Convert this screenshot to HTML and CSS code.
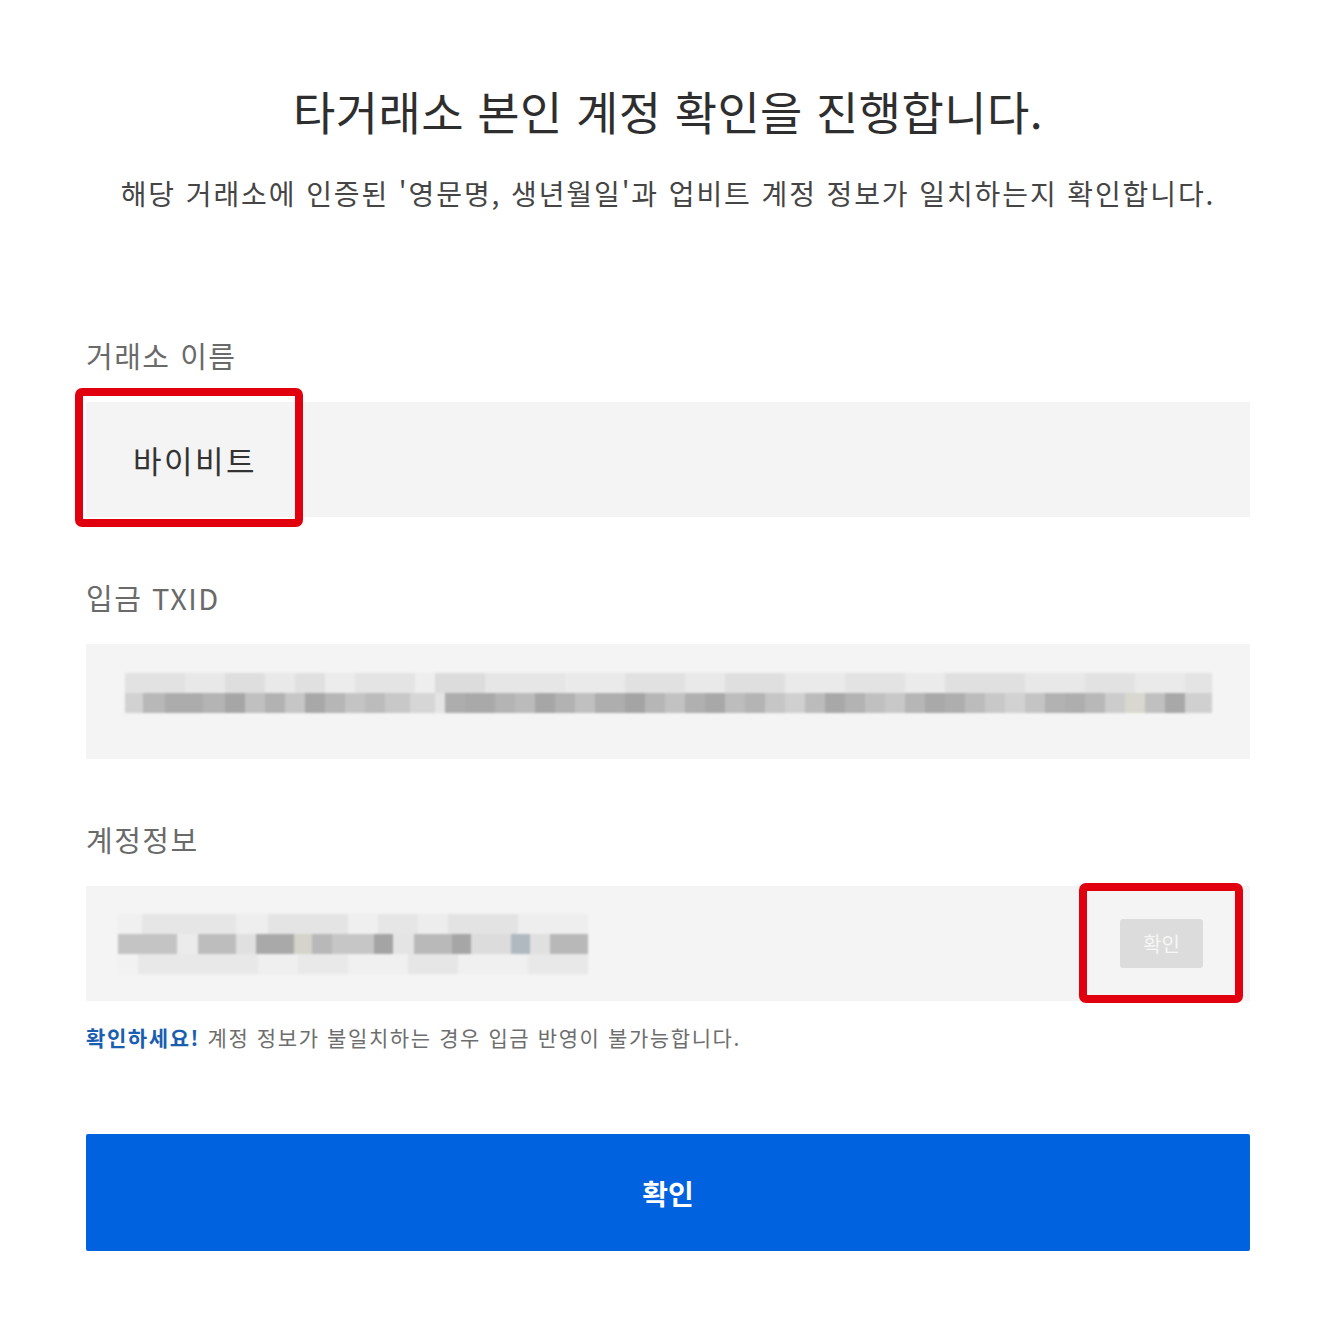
FILE: index.html
```html
<!DOCTYPE html>
<html lang="ko">
<head>
<meta charset="utf-8">
<title>타거래소 본인 계정 확인</title>
<link rel="stylesheet" href="styles.css">
</head>
<body>
<main class="page">
  <h1 class="title">타거래소 본인 계정 확인을 진행합니다.</h1>
  <p class="subtitle">해당 거래소에 인증된 '영문명, 생년월일'과 업비트 계정 정보가 일치하는지 확인합니다.</p>

  <section class="group group-first">
    <div class="label">거래소 이름</div>
    <div class="field field-name">
      <span class="value">바이비트</span>
      <span class="mark mark-name"></span>
    </div>
  </section>

  <section class="group">
    <div class="label">입금 TXID</div>
    <div class="field field-txid">
      <div class="pix pix-txid">
        <div class="pix-row txid-top"></div>
        <div class="pix-row txid-bottom"></div>
      </div>
    </div>
  </section>

  <section class="group">
    <div class="label">계정정보</div>
    <div class="field field-account">
      <div class="pix">
        <div class="pix-row acc-top"></div>
        <div class="pix-row acc-mid"></div>
        <div class="pix-row acc-bottom"></div>
      </div>
      <button class="small-btn" type="button">확인</button>
      <span class="mark mark-btn"></span>
    </div>
    <p class="notice"><strong class="notice-strong">확인하세요!</strong> 계정 정보가 불일치하는 경우 입금 반영이 불가능합니다.</p>
  </section>

  <button class="main-btn" type="button">확인</button>
</main>
</body>
</html>
```
FILE: styles.css
```css
* { box-sizing: border-box; }

html, body {
  margin: 0;
  padding: 0;
  background: #ffffff;
}

body {
  font-family: "Noto Sans CJK KR", "Noto Sans", sans-serif;
  color: #333333;
}

.page {
  width: 1164px;
  margin-left: 86px;
  padding-top: 80px;
  display: flex;
  flex-direction: column;
}

.title {
  margin: 0;
  font-size: 46px;
  line-height: 60px;
  font-weight: 400;
  letter-spacing: 0.4px;
  text-align: center;
  color: #2e2e2e;
}

.subtitle {
  margin: 35px 0 0;
  font-size: 28px;
  line-height: 36px;
  font-weight: 400;
  letter-spacing: 1.9px;
  text-align: center;
  color: #454545;
}

.group {
  display: flex;
  flex-direction: column;
  margin-top: 60px;
}

.group-first {
  margin-top: 124px;
}

.label {
  font-size: 29px;
  line-height: 40px;
  letter-spacing: 1.5px;
  color: #6a6a6a;
  margin-bottom: 27px;
}

.field {
  position: relative;
  height: 115px;
  background: #f4f4f4;
  display: flex;
  align-items: center;
}

.field-name {
  padding-left: 47px;
}

.value {
  font-size: 31px;
  color: #333333;
  letter-spacing: 2.5px;
}

.field-txid {
  padding-left: 39px;
}

.field-account {
  padding-left: 32px;
  padding-right: 47px;
  justify-content: space-between;
}

.pix {
  display: flex;
  flex-direction: column;
  filter: blur(1.2px);
}

.pix-txid {
  margin-bottom: 18px;
}

.pix-row {
  height: 20px;
}

.txid-top {
  width: 1087px;
  background: linear-gradient(to right,
    #e2e2e2 0 60px, #e8e8e8 60px 100px, #dedede 100px 140px, #e9e9e9 140px 170px,
    #e0e0e0 170px 200px, #ececec 200px 230px, #e4e4e4 230px 290px, #eeeeee 290px 310px,
    #dcdcdc 310px 360px, #e6e6e6 360px 440px, #eaeaea 440px 500px, #e1e1e1 500px 560px,
    #e9e9e9 560px 600px, #dfdfdf 600px 660px, #eaeaea 660px 720px, #e3e3e3 720px 780px,
    #ebebeb 780px 820px, #e0e0e0 820px 900px, #e8e8e8 900px 960px, #e2e2e2 960px 1010px,
    #eaeaea 1010px 1060px, #e4e4e4 1060px 1087px);
}

.txid-bottom {
  width: 1087px;
  background: linear-gradient(to right,
    #d2d2d2 0 18px, #b8b8b8 18px 40px, #acacac 40px 78px, #b4b4b4 78px 100px,
    #a6a6a6 100px 120px, #c0c0c0 120px 140px, #b2b2b2 140px 160px, #c6c6c6 160px 180px,
    #a8a8a8 180px 200px, #b6b6b6 200px 220px, #c4c4c4 220px 240px, #bcbcbc 240px 260px,
    #c8c8c8 260px 285px, #d6d6d6 285px 310px, #e4e4e4 310px 320px, #adadad 320px 340px,
    #a9a9a9 340px 370px, #b4b4b4 370px 390px, #bbbbbb 390px 410px, #a6a6a6 410px 430px,
    #b2b2b2 430px 450px, #c0c0c0 450px 470px, #aeaeae 470px 500px, #a4a4a4 500px 520px,
    #b6b6b6 520px 540px, #c2c2c2 540px 560px, #b0b0b0 560px 580px, #a8a8a8 580px 600px,
    #bdbdbd 600px 620px, #b4b4b4 620px 640px, #c6c6c6 640px 660px, #d0d0d0 660px 680px,
    #bcbcbc 680px 700px, #a8a8a8 700px 720px, #b3b3b3 720px 740px, #c0c0c0 740px 760px,
    #c8c8c8 760px 780px, #b6b6b6 780px 800px, #a9a9a9 800px 820px, #aeaeae 820px 840px,
    #bcbcbc 840px 860px, #c8c8c8 860px 880px, #d2d2d2 880px 900px, #c4c4c4 900px 920px,
    #b2b2b2 920px 940px, #aeaeae 940px 960px, #b8b8b8 960px 980px, #cccccc 980px 1000px,
    #d8d8d0 1000px 1020px, #c0c0c0 1020px 1040px, #a8a8a8 1040px 1060px, #d0d0d0 1060px 1087px);
}

.acc-top {
  width: 470px;
  background: linear-gradient(to right,
    #f0f0f0 0 24px, #e6e6e6 24px 118px, #eeeeee 118px 150px, #e4e4e4 150px 230px,
    #efefef 230px 260px, #e6e6e6 260px 300px, #ededed 300px 330px, #e3e3e3 330px 400px,
    #eeeeee 400px 470px);
}

.acc-mid {
  width: 470px;
  background: linear-gradient(to right,
    #c4c4c4 0 59px, #ebebeb 59px 80px, #bdbdbd 80px 118px, #e0e0e0 118px 138px,
    #a9a9a9 138px 176px, #d4d4cc 176px 194px, #b8b8b8 194px 214px, #c6c6c6 214px 256px,
    #a4a4a4 256px 275px, #e4e4e4 275px 296px, #b9b9b9 296px 334px, #a6a6a6 334px 353px,
    #dcdcdc 353px 393px, #b0b8c0 393px 412px, #e0e0e0 412px 432px, #b8b8b8 432px 470px);
}

.acc-bottom {
  width: 470px;
  background: linear-gradient(to right,
    #f2f2f2 0 20px, #e8e8e8 20px 140px, #efefef 140px 180px, #e9e9e9 180px 230px,
    #f0f0f0 230px 290px, #e6e6e6 290px 340px, #f0f0f0 340px 410px, #e8e8e8 410px 470px);
}

.small-btn {
  width: 83px;
  height: 49px;
  border: 0;
  border-radius: 3px;
  background: #dcdcdc;
  color: #f6f6f6;
  font-family: "Noto Sans CJK KR", sans-serif;
  font-size: 20px;
  padding: 0;
}

.mark {
  position: absolute;
  border: 8px solid #e1000d;
  border-radius: 7px;
  pointer-events: none;
}

.mark-name {
  left: -11px;
  top: -14px;
  width: 228px;
  height: 139px;
}

.mark-btn {
  right: 7px;
  top: -3px;
  width: 164px;
  height: 120px;
}

.notice {
  margin: 21px 0 0;
  font-size: 21px;
  line-height: 30px;
  color: #6e6e6e;
  letter-spacing: 1.6px;
}

.notice-strong {
  color: #1a5eb0;
  font-weight: 700;
}

.main-btn {
  margin-top: 82px;
  height: 117px;
  width: 100%;
  border: 0;
  border-radius: 2px;
  background: #0062df;
  color: #ffffff;
  font-family: "Noto Sans CJK KR", sans-serif;
  font-size: 28px;
  font-weight: 700;
}
```
